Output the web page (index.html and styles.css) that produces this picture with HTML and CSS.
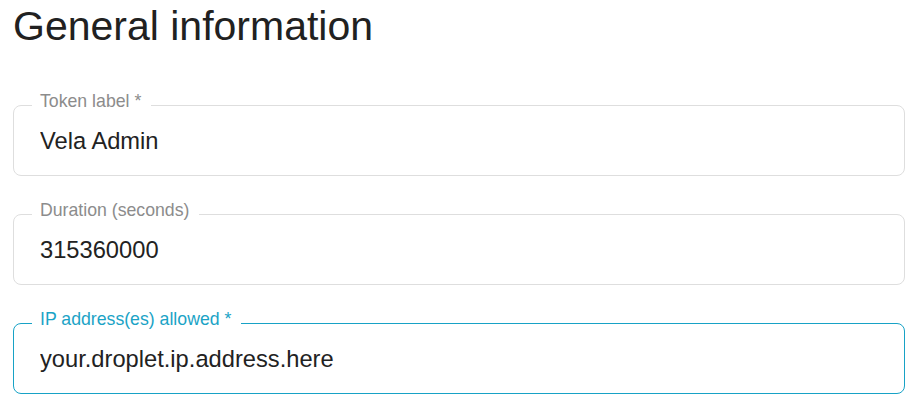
FILE: index.html
```html
<!DOCTYPE html>
<html lang="en">
<head>
<meta charset="utf-8">
<title>General information</title>
<link rel="stylesheet" href="styles.css">
</head>
<body>
<main class="page">
  <h1 class="title">General information</h1>
  <form class="form">
    <fieldset class="field">
      <legend class="field-label">Token label *</legend>
      <input class="field-input" type="text" value="Vela Admin">
    </fieldset>
    <fieldset class="field">
      <legend class="field-label">Duration (seconds)</legend>
      <input class="field-input" type="text" value="315360000">
    </fieldset>
    <fieldset class="field field-focused">
      <legend class="field-label">IP address(es) allowed *</legend>
      <input class="field-input" type="text" value="your.droplet.ip.address.here">
    </fieldset>
  </form>
</main>
</body>
</html>
```

FILE: styles.css
```css
html, body {
  margin: 0;
  padding: 0;
  background: #ffffff;
}

body {
  font-family: "Liberation Sans", Arial, sans-serif;
  color: #212121;
}

.page {
  padding: 0 15px 0 13px;
}

.title {
  margin: 3px 0 0 0;
  font-size: 41px;
  font-weight: 400;
  line-height: 46px;
  color: #212121;
}

.form {
  display: flex;
  flex-direction: column;
  gap: 24px;
  margin-top: 42px;
}

.field {
  margin: 0;
  padding: 0 18px 12px 18px;
  border: 1px solid #dedede;
  border-radius: 8px;
  min-width: 0;
}

.field-label {
  padding: 0 10px 8px 8px;
  font-size: 17.7px;
  line-height: 20px;
  color: #8c8c8c;
}

.field-input {
  display: block;
  width: 100%;
  box-sizing: border-box;
  height: 44px;
  margin: 0;
  padding: 0 8px;
  border: none;
  outline: none;
  background: transparent;
  font-family: "Liberation Sans", Arial, sans-serif;
  font-size: 23.7px;
  color: #222222;
}

.field-focused {
  border-color: #17a2c6;
}

.field-focused .field-label {
  color: #1ba3c6;
}
```
